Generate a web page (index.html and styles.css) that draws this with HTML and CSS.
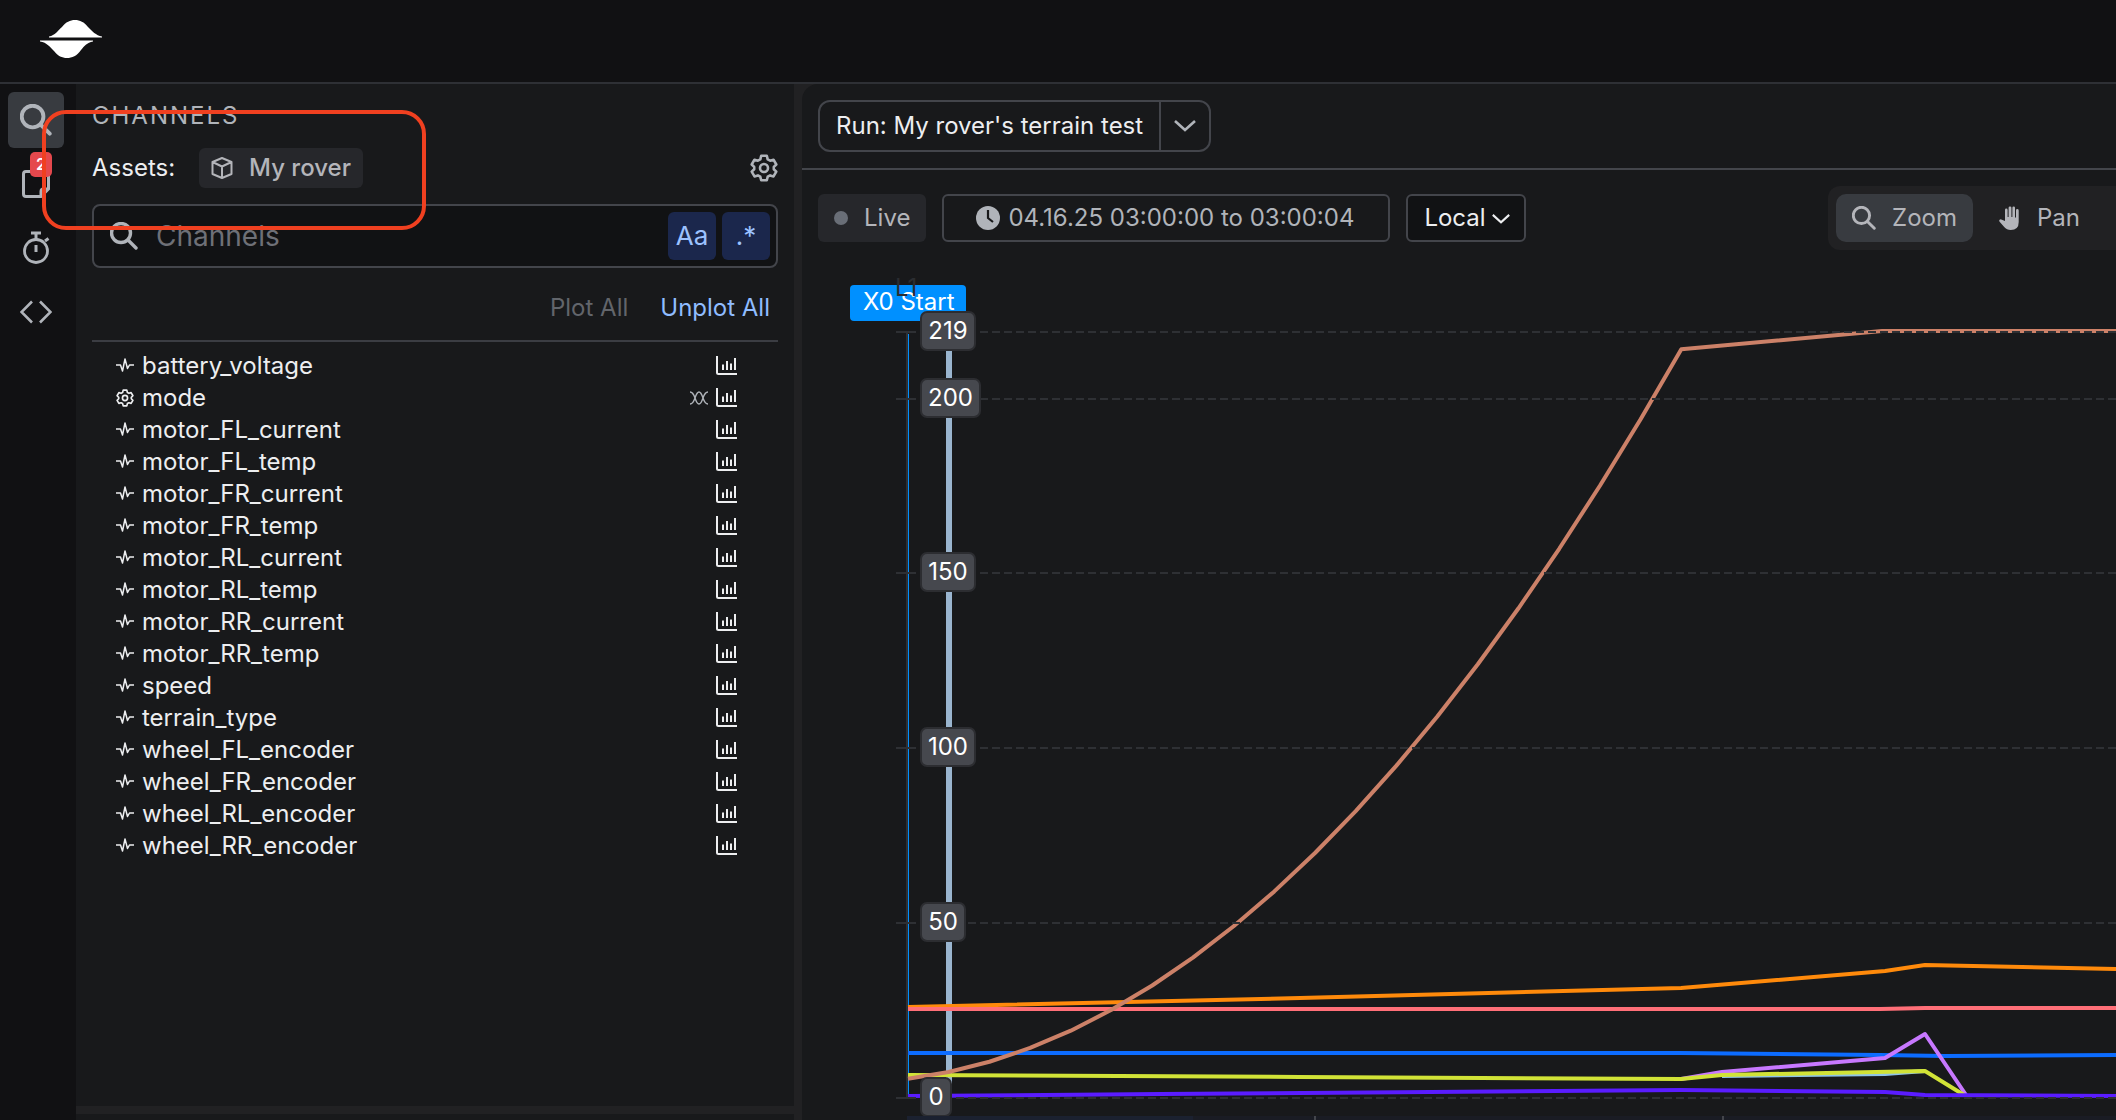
FILE: index.html
```html
<!DOCTYPE html>
<html lang="en">
<head>
  <meta charset="UTF-8">
  <meta name="viewport" content="width=device-width, initial-scale=1.0">
  <title>My rover's terrain test</title>
  <link rel="stylesheet" href="styles.css">
</head>
<body>
  <svg class="sprite" aria-hidden="true">
    <symbol id="i-search" viewBox="0 0 28 28">
      <circle cx="11" cy="11" r="9.5" fill="none" stroke="currentColor" stroke-width="3.4"/>
      <path d="M18 18l8 8" fill="none" stroke="currentColor" stroke-width="3.4" stroke-linecap="round"/>
    </symbol>
    <symbol id="i-gear" viewBox="0 0 28 28">
      <path d="M11.2 1.8h5.6l.9 3.6 2.4 1.300 3.400-1 2.800 4.800-2.500 2.400v2.300l2.500 2.400-2.800 4.800-3.400-1-2.400 1.300-.9 3.600h-5.600l-.9-3.600-2.400-1.300-3.400 1L1.700 17.600l2.500-2.400v-2.300L1.700 10.500l2.800-4.800 3.400 1 2.400-1.300z" fill="none" stroke="currentColor" stroke-width="2.600" stroke-linejoin="round"/>
      <circle cx="14" cy="14" r="4" fill="none" stroke="currentColor" stroke-width="2.600"/>
    </symbol>
    <symbol id="i-pulse" viewBox="0 0 18 18">
      <path d="M0 8h4.500l2 6L9 2l2.500 9.500L13.500 8H18" fill="none" stroke="currentColor" stroke-width="1.500" stroke-linejoin="round"/>
    </symbol>
    <symbol id="i-bars" viewBox="0 0 22 20">
      <path d="M1 0v16.500q0 1.500 1.500 1.500H21" fill="none" stroke="currentColor" stroke-width="2"/>
      <path d="M7 8.500V14M11 5v9M15 7.500V14M19 2v12" fill="none" stroke="currentColor" stroke-width="2"/>
    </symbol>
    <symbol id="i-enum" viewBox="0 0 18 14">
      <path d="M0 1C3 1 4 4 5 7s2 6 4 6 3-3 4-6 2-6 5-6M0 13c3 0 4-3 5-6s2-6 4-6 3 3 4 6 2 6 5 6" fill="none" stroke="currentColor" stroke-width="1.400"/>
    </symbol>
    <symbol id="i-chevron" viewBox="0 0 22 14">
      <path d="M1 2l10 9L21 2" fill="none" stroke="currentColor" stroke-width="2.600"/>
    </symbol>
  </svg>

  <header class="topbar">
    <a class="logo" href="#" aria-label="Home">
      <svg width="62" height="38" viewBox="0 0 62 38"><path d="M9 17.500v-1c6-1 9-6 13-9.500C26 2 30 0 35 0s9 2 13 7c4 4 8 8.500 14 9.500v1zM0 20.500h53v1c-6 1-9 5-12 8.500-4 6-9 8-14 8s-9-2-13-7C10 27 7 22.500 0 21.500z" fill="#fff"/></svg>
    </a>
  </header>

  <div class="layout">
    <nav class="rail">
      <button class="rail-btn active" aria-label="Channels"><svg width="32" height="32"><use href="#i-search"/></svg></button>
      <button class="rail-btn" aria-label="Notes">
        <svg width="28" height="28" viewBox="0 0 28 28"><path d="M4 1.500h20q2.500 0 2.500 2.500v15l-7.500 7.500H4q-2.500 0-2.500-2.500V4Q1.500 1.500 4 1.500zM26 19h-4.500q-2.500 0-2.500 2.500V26" fill="none" stroke="currentColor" stroke-width="3"/></svg>
        <span class="badge">2</span>
      </button>
      <button class="rail-btn" aria-label="Timer">
        <svg width="28" height="34" viewBox="0 0 28 34"><path d="M9 2h10M14 2v6M23 10l3.500-2.500M14 14v7" fill="none" stroke="currentColor" stroke-width="3"/><circle cx="14" cy="20" r="11.500" fill="none" stroke="currentColor" stroke-width="2.800"/></svg>
      </button>
      <button class="rail-btn" aria-label="Code">
        <svg width="32" height="24" viewBox="0 0 32 24"><path d="M12 1.500L1.500 12 12 22.500M20 1.500L30.500 12 20 22.500" fill="none" stroke="currentColor" stroke-width="2.600"/></svg>
      </button>
    </nav>

    <aside class="sidebar">
      <section class="channels">
        <h2>CHANNELS</h2>
        <div class="assets">
          <span>Assets:</span>
          <button class="asset">
            <svg width="22" height="22" viewBox="0 0 22 22"><path d="M11 1l9.500 4v12L11 21l-9.500-4V5zM1.500 5L11 9.500 20.500 5M11 9.500V21" fill="none" stroke="currentColor" stroke-width="2" stroke-linejoin="round"/></svg>
            My rover
          </button>
          <button class="settings" aria-label="Settings"><svg width="28" height="28"><use href="#i-gear"/></svg></button>
        </div>
        <div class="search">
          <svg width="28" height="28"><use href="#i-search"/></svg>
          <input type="text" placeholder="Channels" aria-label="Search channels">
          <button class="toggle">Aa</button>
          <button class="toggle">.*</button>
        </div>
        <div class="plot-actions">
          <button disabled>Plot All</button>
          <button>Unplot All</button>
        </div>
        <ul class="list" id="channel-list"></ul>
      </section>
      <section class="lower"></section>
    </aside>

    <main class="main">
      <div class="run-bar">
        <div class="run">
          <button class="run-name">Run: My rover's terrain test</button>
          <button class="run-more" aria-label="Choose run"><svg width="22" height="14"><use href="#i-chevron"/></svg></button>
        </div>
      </div>
      <div class="toolbar">
        <button class="live"><span class="dot"></span>Live</button>
        <button class="range">
          <svg width="24" height="24" viewBox="0 0 24 24"><circle cx="12" cy="12" r="12" fill="currentColor"/><path d="M12 4v8l5 4" fill="none" stroke="#18191b" stroke-width="2.200"/></svg>
          04.16.25 03:00:00 to 03:00:04
        </button>
        <div class="zone">
          <select aria-label="Time zone"><option>Local</option><option>UTC</option></select>
          <svg width="18" height="12"><use href="#i-chevron"/></svg>
        </div>
        <div class="modes">
          <button class="active"><svg width="24" height="24"><use href="#i-search"/></svg>Zoom</button>
          <button>
            <svg width="24" height="24" viewBox="0 0 24 24"><path d="M6 15V4q0-1.400 1.300-1.400T8.600 4v7h1V1.800Q9.600.4 11 .4t1.400 1.400V11h1V1.800q0-1.400 1.300-1.400T16 1.800V11.500h1V4.500q0-1.400 1.300-1.400t1.400 1.400V16q0 8-8 8-4 0-6.500-3L.6 15.800q-1-1.200 0-2.100t2.300 0z" transform="translate(2)" fill="currentColor"/></svg>
            Pan
          </button>
        </div>
      </div>
      <svg class="chart" id="chart" viewBox="0 0 1314 854" role="img" aria-label="Telemetry plot"></svg>
    </main>
  </div>

  <div class="highlight"></div>

  <script>
    const channels = [
      "battery_voltage", "mode",
      "motor_FL_current", "motor_FL_temp", "motor_FR_current", "motor_FR_temp",
      "motor_RL_current", "motor_RL_temp", "motor_RR_current", "motor_RR_temp",
      "speed", "terrain_type",
      "wheel_FL_encoder", "wheel_FR_encoder", "wheel_RL_encoder", "wheel_RR_encoder"
    ];

    document.getElementById("channel-list").innerHTML = channels.map(name => {
      const isEnum = name === "mode";
      return `<li>
        <svg width="18" height="18"><use href="#${isEnum ? "i-gear" : "i-pulse"}"/></svg>
        <span class="name">${name}</span>
        ${isEnum ? '<svg class="enum" width="18" height="14"><use href="#i-enum"/></svg>' : ""}
        <svg width="22" height="20"><use href="#i-bars"/></svg>
      </li>`;
    }).join("");

    // Plot area: x runs from 106 to 1314, y value 0 sits at 832
    const LEFT = 106;
    const BASE = 832;
    const RIGHT = 1314;
    const toY = value => Math.floor(BASE - value * 3.495);

    const encoder = [];
    for (let t = 0; t < 20; t++) {
      encoder.push([LEFT + t * 40.7, BASE - 3.495 * (5.5 + 1.43 * t + 0.503 * t * t)]);
    }
    encoder.push([1080, 65], [RIGHT, 65]);

    const series = [
      { color: "#ff8a0b", points: [[106, 741], [498, 732], [879, 722], [1083, 705], [1123, 699], [RIGHT, 703]] },
      { color: "#ff6f78", points: [[106, 743], [1078, 743], [1123, 742], [RIGHT, 742]] },
      { color: "#0c6cff", points: [[106, 787], [879, 787], [1078, 789], [1143, 790], [RIGHT, 789]] },
      { color: "#c778ff", points: [[879, 813], [920, 806], [1083, 792], [1123, 768], [1164, 829]] },
      { color: "#8ec4e8", points: [[920, 810], [1083, 808], [1123, 805]] },
      { color: "#d1e337", points: [[106, 809], [498, 811], [879, 813], [920, 809], [1123, 805], [1162, 829]] },
      { color: "#5a1cff", points: [[106, 830], [358, 828], [879, 824], [1083, 826], [1123, 829], [RIGHT, 830]] },
      { color: "#cc8168", points: encoder }
    ];

    let svg = `
      <rect class="tag" x="48" y="19" width="116" height="36" rx="4"/>
      <text class="tag-text" x="61" y="44">X0 Start</text>
      <text class="marker" x="93" y="30">L1</text>
      <rect class="cursor" x="144" y="68" width="6" height="764"/>
      <path class="axis" d="M105 66V833"/>
      <path class="start" d="M106.500 68V832"/>`;

    svg += series.map(s =>
      `<polyline class="line" stroke="${s.color}" points="${s.points.map(p => p.join(",")).join(" ")}"/>`
    ).join("");

    const ticks = [219, 200, 150, 100, 50, 0];
    svg += ticks.map(v => {
      const y = toY(v);
      const digits = String(v).length;
      const width = { 1: 30, 2: 44, 3: v === 200 ? 59 : 54 }[digits];
      return `
        <path class="tick" d="M94 ${y}h12"/>
        <path class="grid" d="M106 ${y}H${RIGHT}"/>
        <rect class="label-box" x="119" y="${y - 20}" width="${width}" height="38" rx="6"/>
        <text class="label" x="${119 + width / 2}" y="${y + 7}">${v}</text>`;
    }).join("");

    // Top edge of the overview strip
    svg += `
      <rect class="overview" x="105" y="850" width="1209" height="4"/>
      <rect class="overview-window" x="105" y="850" width="286" height="4"/>
      <rect class="overview-tick" x="512" y="850" width="2" height="4"/>
      <rect class="overview-tick" x="920" y="850" width="2" height="4"/>`;

    document.getElementById("chart").innerHTML = svg;
  </script>
</body>
</html>
```
FILE: styles.css
```css
* {
  box-sizing: border-box;
}

body {
  margin: 0;
  height: 100vh;
  display: flex;
  flex-direction: column;
  overflow: hidden;
  background: #111113;
  color: #edeef0;
  font-family: Inter, "Liberation Sans", sans-serif;
  font-size: 24px;
  line-height: 32px;
}

button,
input,
select {
  margin: 0;
  padding: 0;
  border: none;
  background: none;
  color: inherit;
  font: inherit;
}

button {
  display: flex;
  align-items: center;
  justify-content: center;
  cursor: pointer;
}

svg {
  display: block;
  flex: none;
}

.sprite {
  position: absolute;
  width: 0;
  height: 0;
}

.topbar {
  flex: none;
  height: 84px;
  padding: 20px 40px;
  border-bottom: 2px solid #2e3035;
}

.logo {
  display: inline-block;
}

.layout {
  flex: 1;
  min-height: 0;
  display: flex;
  background: linear-gradient(90deg, #111113 76px, #212123 76px);
}

/* Icon rail */
.rail {
  flex: none;
  width: 76px;
  padding: 8px;
  display: flex;
  flex-direction: column;
  gap: 8px;
  color: #b0b4ba;
}

.rail-btn {
  position: relative;
  width: 56px;
  height: 56px;
  border-radius: 6px;
}

.rail-btn.active {
  background: #383b40;
}

.badge {
  position: absolute;
  top: -4px;
  left: 22px;
  width: 22px;
  height: 25px;
  border-radius: 5px;
  background: #e5484d;
  color: #fff;
  font-size: 16px;
  font-weight: 600;
  line-height: 25px;
}

/* Channel panel */
.sidebar {
  flex: none;
  width: 726px;
  border-right: 8px solid #212123;
  background: #18191b;
  display: flex;
  flex-direction: column;
}

.channels {
  flex: 1;
  padding: 16px;
}

.lower {
  height: 14px;
  border-top: 8px solid #212123;
}

h2 {
  margin: 0;
  color: #b0b4ba;
  font-size: 24px;
  font-weight: 400;
  letter-spacing: 2px;
}

.assets {
  display: flex;
  align-items: center;
  gap: 24px;
  margin: 16px 0;
}

.asset {
  height: 40px;
  padding: 0 12px;
  gap: 16px;
  border-radius: 6px;
  background: #26272b;
  color: #b4b5ba;
  font-weight: 500;
}

.settings {
  margin-left: auto;
  color: #b0b4ba;
}

.search {
  display: flex;
  align-items: center;
  gap: 6px;
  height: 64px;
  padding: 0 6px 0 16px;
  border: 2px solid #43454b;
  border-radius: 8px;
  background: #111214;
  color: #b0b4ba;
}

.search input {
  flex: 1;
  min-width: 0;
  padding: 0 12px;
  font-size: 28px;
  outline: none;
}

.search input::placeholder {
  color: #6e7077;
}

.toggle {
  width: 48px;
  height: 48px;
  border-radius: 6px;
  background: #1b274c;
  color: #9cc2ff;
  font-size: 26px;
}

.plot-actions {
  display: flex;
  justify-content: flex-end;
  gap: 32px;
  padding: 24px 8px 16px;
  border-bottom: 2px solid #3b3d43;
}

.plot-actions button {
  color: #8fbcff;
}

.plot-actions button:disabled {
  color: #62656b;
}

.list {
  margin: 0;
  padding: 8px 40px 0 24px;
  list-style: none;
}

.list li {
  display: flex;
  align-items: center;
  gap: 8px;
}

.list .name {
  flex: 1;
}

.list .enum {
  color: #b0b4ba;
}

/* Plot panel */
.main {
  flex: 1;
  min-width: 0;
  background: #18191b;
  border-top-left-radius: 16px;
}

.run-bar {
  display: flex;
  padding: 16px;
  border-bottom: 2px solid #43454b;
}

.run {
  display: flex;
  height: 52px;
  border: 2px solid #43454b;
  border-radius: 12px;
}

.run-name {
  padding: 0 16px;
}

.run-more {
  width: 50px;
  border-left: 2px solid #43454b;
  color: #b0b4ba;
}

.toolbar {
  display: flex;
  align-items: center;
  gap: 16px;
  padding: 16px 0 16px 16px;
  color: #b4b5ba;
}

.live,
.range,
.zone select,
.modes button {
  height: 48px;
  border-radius: 6px;
  white-space: nowrap;
}

.live {
  padding: 0 16px;
  gap: 16px;
  background: #26272b;
}

.dot {
  width: 14px;
  height: 14px;
  border-radius: 50%;
  background: #696e77;
}

.range {
  padding: 0 34px 0 32px;
  gap: 8px;
  border: 2px solid #43454b;
  color: #b0b4ba;
}

.zone {
  position: relative;
}

.zone select {
  width: 120px;
  padding: 0 16px;
  border: 2px solid #43454b;
  background: #111214;
  color: #edeef0;
  appearance: none;
}

.zone svg {
  position: absolute;
  top: 19px;
  right: 16px;
  color: #edeef0;
  pointer-events: none;
}

.modes {
  display: flex;
  gap: 8px;
  margin-left: auto;
  padding: 8px 20px 8px 8px;
  border-radius: 12px 0 0 12px;
  background: #212123;
}

.modes button {
  padding: 0 16px;
  gap: 16px;
}

.modes .active {
  border-radius: 10px;
  background: #383b40;
}

/* Chart */
.chart {
  width: 100%;
}

.line {
  fill: none;
  stroke-width: 4;
  stroke-linejoin: round;
}

.grid,
.tick,
.axis {
  fill: none;
  stroke: #2e3034;
  stroke-width: 2;
}

.grid {
  stroke-dasharray: 8 4;
}

.start {
  stroke: #0090ff;
  stroke-width: 1;
}

.cursor {
  fill: #9ab5cf;
}

.tag {
  fill: #0090ff;
}

.tag-text,
.label {
  fill: #fff;
}

.marker {
  fill: #2b2d31;
}

.label {
  text-anchor: middle;
}

.label-box {
  fill: #46484e;
  stroke: #2c2d31;
  stroke-width: 2;
}

.overview {
  fill: #1a1c24;
}

.overview-window {
  fill: #1b2130;
}

.overview-tick {
  fill: #43454b;
}

/* Callout around the selected asset */
.highlight {
  position: absolute;
  top: 110px;
  left: 42px;
  width: 384px;
  height: 120px;
  border: 4px solid #f04020;
  border-radius: 24px;
  pointer-events: none;
}
```
